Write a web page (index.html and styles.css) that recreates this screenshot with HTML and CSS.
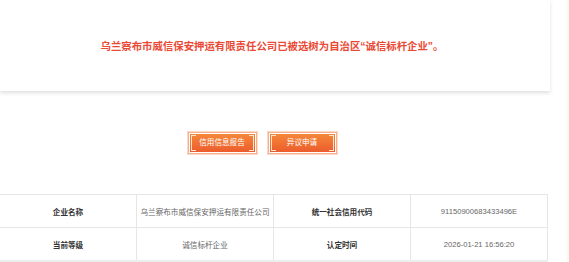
FILE: index.html
```html
<!DOCTYPE html>
<html>
	<head>
		<meta charset="utf-8">
        <title>诚信标杆企业</title>
        <link rel="stylesheet" href="styles.css">
	</head>
	<body>
        <div class="main">
            <div class="card">
                <p class="notice">乌兰察布市威信保安押运有限责任公司已被选树为自治区“诚信标杆企业”。</p>
            </div>

            <div class="btns">
                <a class="btn">信用信息报告</a>
                <a class="btn">异议申请</a>
            </div>

            <table class="info" cellspacing="0">
                <tr>
                    <th>企业名称</th>
                    <td>乌兰察布市威信保安押运有限责任公司</td>
                    <th>统一社会信用代码</th>
                    <td>91150900683433496E</td>
                </tr>
                <tr>
                    <th>当前等级</th>
                    <td>诚信标杆企业</td>
                    <th>认定时间</th>
                    <td>2026-01-21 16:56:20</td>
                </tr>
            </table>
        </div>
	</body>
</html>
```

FILE: styles.css
```css
body{
    margin: 0;
    background: #fbfaf3;
    font-family: "Liberation Sans", "Noto Sans CJK SC", sans-serif;
}
.main
{
    width: 566px;
    height: 262px;
    background: #fff;
    overflow: hidden;
}
.card
{
    width: 536px;
    height: 91px;
    padding-left: 4px;
    padding-right: 10px;
    background: #fff;
    box-shadow: 0 2px 4px rgba(0,0,0,0.13);
    display: flex;
    align-items: center;
    justify-content: center;
}
.notice
{
    margin: 0;
    color: #ea4a35;
    font-size: 10.4px;
    font-weight: bold;
}
.btns
{
    display: flex;
    justify-content: center;
    gap: 11px;
    width: 524px;
    margin-top: 41px;
}
.btn
{
    position: relative;
    box-sizing: border-box;
    width: 69px;
    height: 22px;
    border: 1px solid #f7b08e;
    padding: 1px;
    background-clip: content-box;
    background-image: linear-gradient(#f58a3a, #eb5a2c);
    color: #fff;
    font-size: 7.6px;
    text-align: center;
    line-height: 18px;
    outline: 1px solid #fbd9c6;
}
.btn::before, .btn::after
{
    content: "";
    position: absolute;
    top: 2px;
    width: 4px;
    height: 14px;
    border: 1px solid #fde3d2;
}
.btn::before
{
    left: 2px;
    border-right: none;
}
.btn::after
{
    right: 2px;
    border-left: none;
}
.info
{
    margin-top: 40px;
    width: 548px;
    border-collapse: collapse;
    border-bottom: 2px solid #eeeeee;
    font-size: 7.6px;
    text-align: center;
}
.info th, .info td
{
    width: 136px;
    height: 32px;
    padding: 0;
    border: 1px solid #e6e6e6;
}
.info tr > :first-child
{
    border-left: none;
}
.info th
{
    color: #333;
    font-weight: bold;
}
.info td
{
    color: #666;
}
```
